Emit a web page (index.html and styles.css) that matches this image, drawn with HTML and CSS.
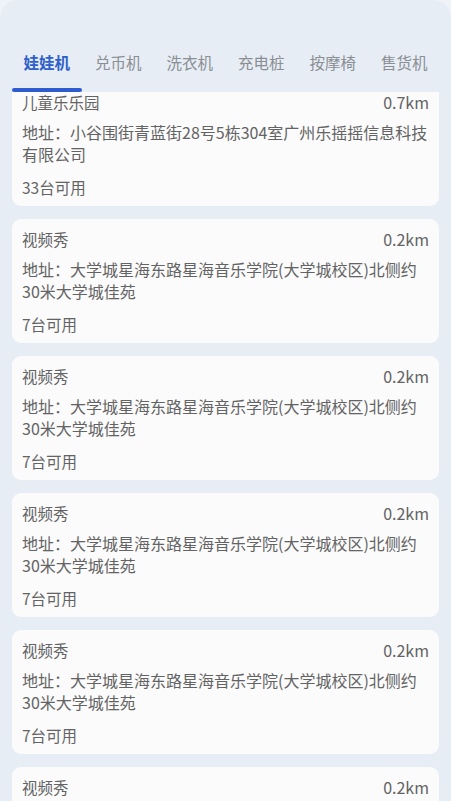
FILE: index.html
```html
<!DOCTYPE html>
<html lang="zh-CN">
<head>
<meta charset="utf-8">
<link rel="stylesheet" href="styles.css">
</head>
<body>
<div class="panel">
  <nav class="tabs">
    <div class="tab active">娃娃机<span class="bar"></span></div>
    <div class="tab">兑币机</div>
    <div class="tab">洗衣机</div>
    <div class="tab">充电桩</div>
    <div class="tab">按摩椅</div>
    <div class="tab">售货机</div>
  </nav>
  <div class="list">
    <div class="inner">
      <div class="card">
        <div class="row"><span>儿童乐乐园</span><span>0.7km</span></div>
        <div class="addr">地址：小谷围街青蓝街28号5栋304室广州乐摇摇信息科技有限公司</div>
        <div class="count">33台可用</div>
      </div>
      <div class="card">
        <div class="row"><span>视频秀</span><span>0.2km</span></div>
        <div class="addr">地址：大学城星海东路星海音乐学院(大学城校区)北侧约30米大学城佳苑</div>
        <div class="count">7台可用</div>
      </div>
      <div class="card">
        <div class="row"><span>视频秀</span><span>0.2km</span></div>
        <div class="addr">地址：大学城星海东路星海音乐学院(大学城校区)北侧约30米大学城佳苑</div>
        <div class="count">7台可用</div>
      </div>
      <div class="card">
        <div class="row"><span>视频秀</span><span>0.2km</span></div>
        <div class="addr">地址：大学城星海东路星海音乐学院(大学城校区)北侧约30米大学城佳苑</div>
        <div class="count">7台可用</div>
      </div>
      <div class="card">
        <div class="row"><span>视频秀</span><span>0.2km</span></div>
        <div class="addr">地址：大学城星海东路星海音乐学院(大学城校区)北侧约30米大学城佳苑</div>
        <div class="count">7台可用</div>
      </div>
      <div class="card">
        <div class="row"><span>视频秀</span><span>0.2km</span></div>
        <div class="addr">地址：大学城星海东路星海音乐学院(大学城校区)北侧约30米大学城佳苑</div>
        <div class="count">7台可用</div>
      </div>
    </div>
  </div>
</div>
</body>
</html>
```

FILE: styles.css
```css
html, body {
  margin: 0;
  padding: 0;
  height: 100%;
  overflow: hidden;
  background: #eff3f8;
  font-family: "Noto Sans CJK SC", "Noto Sans", sans-serif;
}
.panel {
  height: 801px;
  background: #e6edf5;
  border-radius: 18px 18px 0 0;
  display: flex;
  flex-direction: column;
}
.tabs {
  height: 92px;
  box-sizing: border-box;
  padding: 0 11px;
  display: flex;
  align-items: flex-start;
}
.tab {
  flex: 1;
  position: relative;
  text-align: center;
  font-size: 15.5px;
  line-height: 22px;
  padding-top: 51px;
  height: 41px;
  color: #8b8e93;
}
.tab.active {
  color: #2f5fc9;
  font-weight: 700;
}
.tab .bar {
  position: absolute;
  left: 1px;
  right: 1px;
  bottom: 0;
  height: 4px;
  border-radius: 2px;
  background: #2e5bd0;
}
.list {
  flex: 1;
  overflow: hidden;
}
.inner {
  margin-top: -10px;
  padding: 0 12px;
  display: flex;
  flex-direction: column;
  gap: 13px;
}
.card {
  background: #fbfbfc;
  border-radius: 9px;
  padding: 9px 10px 8px;
  color: #636363;
  font-size: 16px;
  line-height: 22px;
}
.row {
  display: flex;
  justify-content: space-between;
}
.row span:first-child {
  font-size: 15.5px;
}
.addr {
  margin-top: 8px;
}
.count {
  margin-top: 11px;
  font-size: 15.5px;
}
```
